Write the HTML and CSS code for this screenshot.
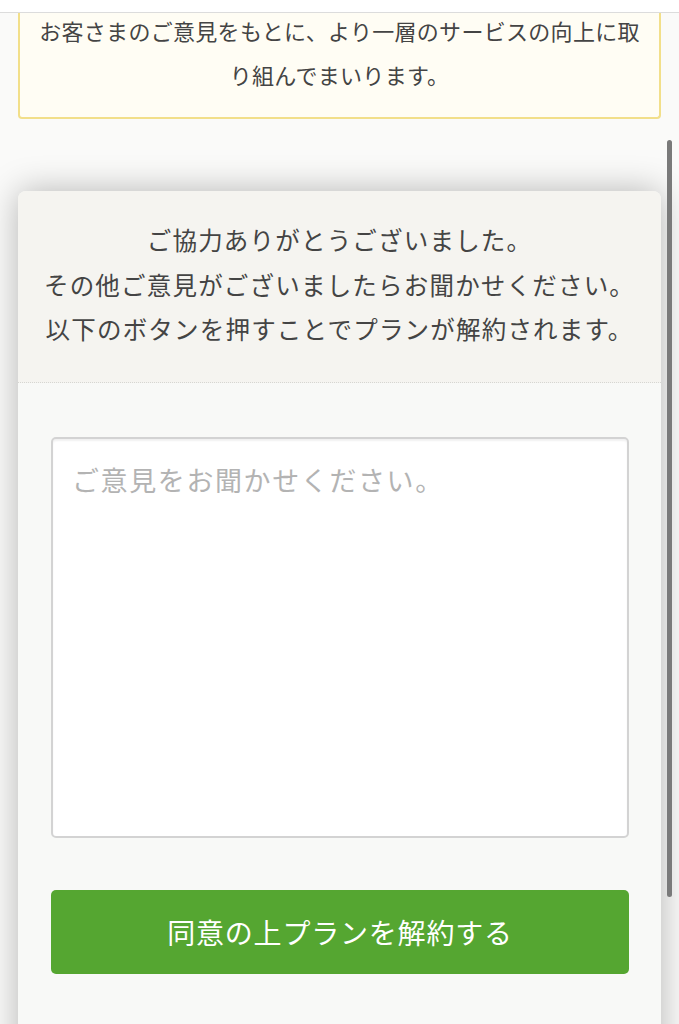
FILE: index.html
```html
<!DOCTYPE html>
<html lang="ja">
<head>
<meta charset="utf-8">
<title>解約</title>
<link rel="stylesheet" href="styles.css">
</head>
<body>
<div class="topbar"></div>
<div class="notice">
  <p>お客さまのご意見をもとに、より一層のサービスの向上に取り組んでまいります。</p>
</div>
<div class="modal">
  <div class="modal-head">
    <p>ご協力ありがとうございました。<br>その他ご意見がございましたらお聞かせください。<br>以下のボタンを押すことでプランが解約されます。</p>
  </div>
  <div class="modal-body">
    <textarea class="opinion" placeholder="ご意見をお聞かせください。"></textarea>
    <button class="submit" type="button">同意の上プランを解約する</button>
  </div>
</div>
<div class="scrollbar"></div>
</body>
</html>
```
FILE: styles.css
```css
html, body {
  margin: 0;
  padding: 0;
  height: 1024px;
  overflow: hidden;
}
body {
  background: #fafaf9;
  font-family: "Noto Sans CJK JP", "Noto Sans", sans-serif;
  color: #444;
}
.topbar {
  position: relative;
  z-index: 2;
  height: 12px;
  background: #fff;
  border-bottom: 1px solid #dcdcdc;
}
.notice {
  margin: 0 18px;
  padding: 0 18px 21px;
  background: #fffdf4;
  border: 2px solid #f2df8a;
  border-top: none;
  border-radius: 0 0 4px 4px;
}
.notice p {
  margin: -5px 0 0;
  font-size: 22px;
  line-height: 44px;
  letter-spacing: 0.3px;
  text-align: center;
}
.modal {
  margin: 72px 18px 0;
  background: #f8f9f7;
  border-radius: 8px 8px 0 0;
  box-shadow: 0 0 34px rgba(0, 0, 0, 0.28);
  height: 900px;
}
.modal-head {
  background: #f5f4f0;
  border-radius: 8px 8px 0 0;
  padding: 27px 6px 30px;
  border-bottom: 1px dotted #d6d6d2;
}
.modal-head p {
  margin: 0;
  font-size: 24.5px;
  line-height: 44.5px;
  letter-spacing: 1.2px;
  text-align: center;
  color: #444;
}
.modal-body {
  padding: 54px 32px 0 33px;
  display: flex;
  flex-direction: column;
  gap: 52px;
}
.opinion {
  display: block;
  box-sizing: border-box;
  width: 100%;
  height: 401px;
  margin: 0;
  padding: 23px 19px;
  border: 2px solid #d3d3d3;
  border-radius: 5px;
  background: #fff;
  box-shadow: inset 0 2px 2px rgba(0, 0, 0, 0.06);
  font-family: "Noto Sans CJK JP", "Noto Sans", sans-serif;
  font-size: 27px;
  line-height: 36px;
  letter-spacing: 1.6px;
  color: #444;
  resize: none;
  outline: none;
}
.opinion::placeholder {
  color: #b3b3b3;
}
.submit {
  display: block;
  width: 100%;
  height: 84px;
  margin: 0;
  padding: 0;
  border: none;
  border-radius: 5px;
  background: #55a631;
  color: #fff;
  font-family: "Noto Sans CJK JP", "Noto Sans", sans-serif;
  font-size: 28px;
  letter-spacing: 0.8px;
}
.scrollbar {
  position: fixed;
  left: 667px;
  top: 140px;
  width: 5px;
  height: 757px;
  border-radius: 3px;
  background: #7a7a7a;
}
```
